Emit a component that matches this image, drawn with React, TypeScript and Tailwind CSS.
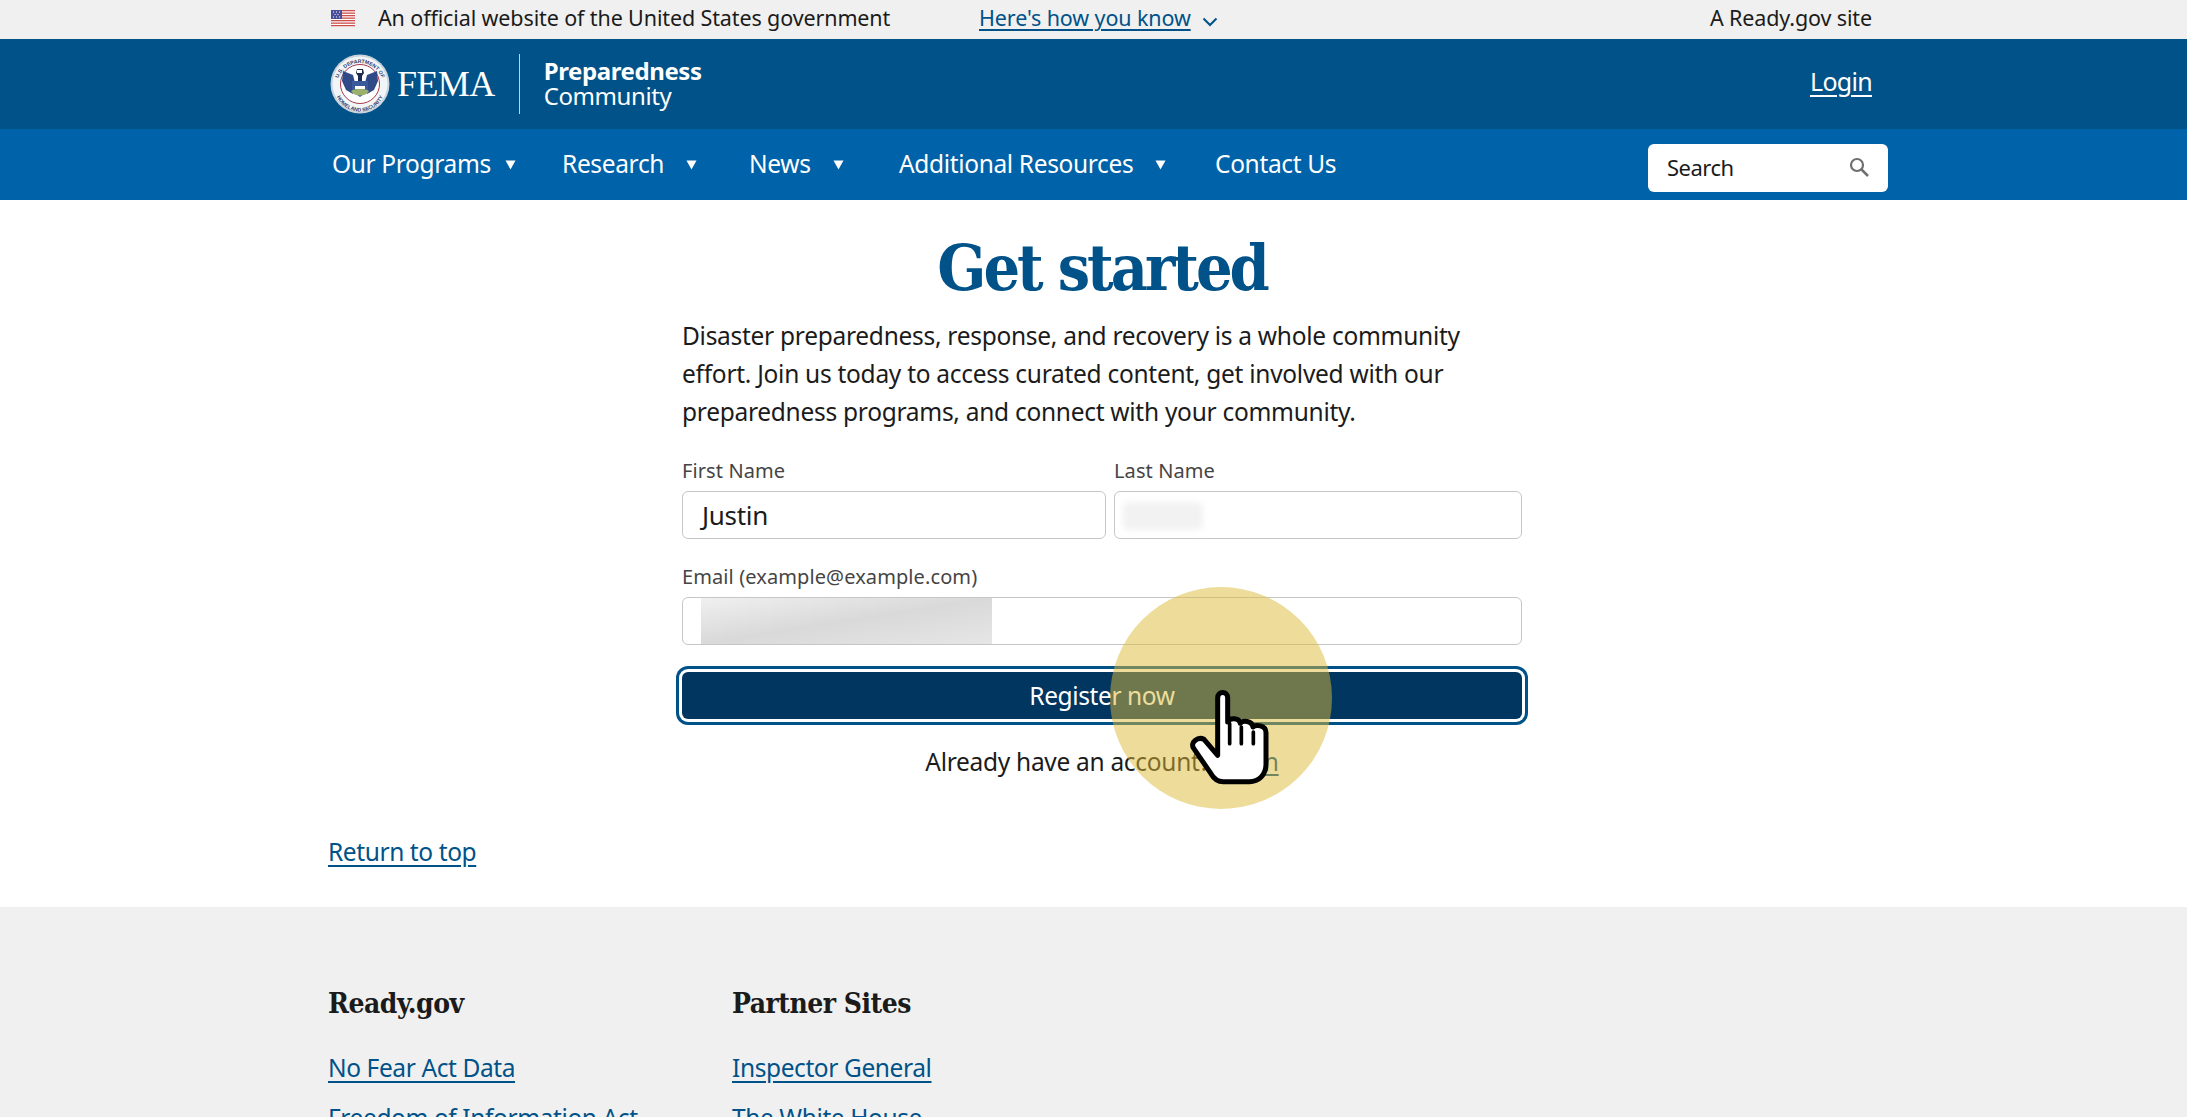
// FEMA Preparedness Community "Get started" page with a click highlight on top.

const NAV = [
  { label: 'Our Programs', width: 'w-[230px]', gap: 'ml-[14px]' },
  { label: 'Research', width: 'w-[187px]', gap: 'ml-[22px]' },
  { label: 'News', width: 'w-[150px]', gap: 'ml-[22px]' },
  { label: 'Additional Resources', width: 'w-[316px]', gap: 'ml-[22px]' },
];

function Flag() {
  const stripes = [0, 1, 2, 3, 4, 5, 6];
  return (
    <svg width="24" height="17" viewBox="0 0 24 17" className="shrink-0">
      <rect width="24" height="17" fill="#fff" />
      {stripes.map((i) => (
        <rect key={i} y={i * 2.5} width="24" height="1.3" fill="#c9504c" />
      ))}
      <rect width="11" height="9" fill="#4a4f9a" />
      <path d="M2 2h1M5 2h1M8 2h1M3.500 4.500h1M6.500 4.500h1M2 7h1M5 7h1M8 7h1" stroke="#fff" strokeWidth="1" />
    </svg>
  );
}

function Seal() {
  return (
    <svg width="60" height="60" viewBox="0 0 60 60" className="shrink-0">
      <circle cx="30" cy="30" r="29.500" fill="#c9d3dc" />
      <circle cx="30" cy="30" r="27.500" fill="#f2f5f8" />
      <circle cx="30" cy="30" r="19.500" fill="#fff" stroke="#a8394a" strokeWidth="1" />
      <defs>
        <path id="seal-top" d="M7 32a23 23 0 0 1 46 0" />
        <path id="seal-bottom" d="M4.500 32a25.500 25.500 0 0 0 51 0" />
      </defs>
      <text fontSize="5.200" fontFamily="Liberation Sans, sans-serif" fontWeight="700" fill="#2a3f6b">
        <textPath href="#seal-top" startOffset="50%" textAnchor="middle">U.S. DEPARTMENT OF</textPath>
      </text>
      <text fontSize="5.200" fontFamily="Liberation Sans, sans-serif" fontWeight="700" fill="#2a3f6b">
        <textPath href="#seal-bottom" startOffset="50%" textAnchor="middle">HOMELAND SECURITY</textPath>
      </text>
      <path d="M13 17l10 4 2 8-2 11-7-4-4-9zM47 17l-10 4-2 8 2 11 7-4 4-9z" fill="#2f4a86" />
      <path d="M22 27h16v10l-8 6-8-6z" fill="#3a5a9c" />
      <path d="M27 15h6l1 4-2 3v5h-4v-5l-2-3z" fill="#1f2c4f" />
      <path d="M27 16h5v3h-5z" fill="#fff" />
      <path d="M21 37c4-3 14-3 18 0-3 6-15 6-18 0z" fill="#9bb06a" />
      <path d="M25 32h10v3H25z" fill="#fff" />
    </svg>
  );
}

function Hand() {
  return (
    <svg width="120" height="130" viewBox="0 0 360 390" className="absolute left-[1170px] top-[672px]">
      <path
        d="M143 250V78c0-22 30-22 30 0v72c5-14 34-14 38 4 7-10 35-8 38 11 8-8 39-6 39 17v95c0 32-22 52-50 52h-78c-16 0-28-8-37-24l-52-76c-12-18 13-36 31-27z"
        fill="#fff"
        stroke="#000"
        strokeWidth="15"
        strokeLinejoin="round"
      />
      <path d="M179 155v60M214 165v50M250 180v35" stroke="#000" strokeWidth="11" strokeLinecap="round" fill="none" />
    </svg>
  );
}

function Field({ label, value, width, children }: { label: string; value?: string; width: string; children?: React.ReactNode }) {
  return (
    <div className={width}>
      <div className="mb-[5px] h-[30px] text-[20px] leading-[30px] tracking-[0.1px] text-[#454545]">{label}</div>
      <div className="relative h-[48px] overflow-hidden rounded-[6px] border border-[#c6c6c6] bg-white pl-[19px] text-[26px] leading-[46px] tracking-[-0.3px] text-[#1b1b1b]">
        {value}
        {children}
      </div>
    </div>
  );
}

export default function App() {
  return (
    <div className="relative h-[1117px] overflow-hidden bg-white font-['Noto_Sans',sans-serif] text-[#1b1b1b]">
      {/* gov banner */}
      <div className="flex h-[39px] items-center bg-[#f0f0f0] pb-[2px] pl-[331px] pr-[315px] text-[21.500px] tracking-[-0.12px]">
        <Flag />
        <span className="ml-[23px] w-[601px]">An official website of the United States government</span>
        <a className="text-[#005288] underline underline-offset-[3px]">Here's how you know</a>
        <svg width="16" height="10" viewBox="0 0 16 10" className="ml-[11px] mt-[7px]">
          <path d="M1.500 1.500L8 8l6.500-6.500" fill="none" stroke="#005288" strokeWidth="2" />
        </svg>
        <span className="ml-auto">A Ready.gov site</span>
      </div>

      {/* logo row */}
      <div className="flex h-[90px] items-center bg-[#005288] pl-[330px] pr-[315px] text-white">
        <Seal />
        <span className="ml-[7px] font-['Liberation_Serif',serif] text-[36px] tracking-[-0.6px]">FEMA</span>
        <div className="ml-[24px] h-[60px] w-px bg-[#bcd4e6]" />
        <div className="mb-[2px] ml-[24px] text-[24px] leading-[25px] tracking-[-0.4px]">
          <div className="font-bold">Preparedness</div>
          <div>Community</div>
        </div>
        <a className="mb-[4px] ml-auto text-[25px] tracking-[-0.7px] underline underline-offset-[4px]">Login</a>
      </div>

      {/* main nav */}
      <div className="flex h-[71px] items-center bg-[#0062a8] pl-[332px] pr-[299px] text-[24.500px] tracking-[-0.35px] text-white">
        {NAV.map((item) => (
          <div key={item.label} className={`flex items-center ${item.width}`}>
            <span>{item.label}</span>
            <svg width="11" height="10" viewBox="0 0 11 10" className={item.gap}>
              <path d="M0.500 0.500h10L5.500 9.500z" fill="#fff" />
            </svg>
          </div>
        ))}
        <span>Contact Us</span>
        <div className="ml-auto mt-[7px] flex h-[48px] w-[240px] items-center justify-between rounded-[6px] bg-white pb-[2px] pl-[19px] pr-[19px] text-[22px] tracking-[-0.5px] text-[#1b1b1b]">
          Search
          <svg width="20" height="20" viewBox="0 0 20 20">
            <circle cx="8" cy="8" r="6" fill="none" stroke="#6f6f6f" strokeWidth="2.200" />
            <path d="M12.500 12.500L19 19" stroke="#6f6f6f" strokeWidth="2.500" />
          </svg>
        </div>
      </div>

      {/* form column */}
      <main className="ml-[682px] w-[840px]">
        <h1 className="pt-[28px] text-center font-['DejaVu_Serif_Condensed','Liberation_Serif',serif] text-[64px] font-bold leading-[80px] tracking-[-3px] text-[#005288]">
          Get started
        </h1>
        <p className="mt-[9px] w-[800px] text-[24.500px] leading-[38px] tracking-[-0.28px]">
          Disaster preparedness, response, and recovery is a whole community effort. Join us today to access curated
          content, get involved with our preparedness programs, and connect with your community.
        </p>
        <div className="mt-[25px] flex gap-[8px]">
          <Field label="First Name" value="Justin" width="w-[424px]" />
          <Field label="Last Name" width="w-[408px]">
            <div className="absolute left-[8px] top-[10px] h-[28px] w-[80px] rounded-[6px] bg-[#f2f2f2] blur-[3px]" />
          </Field>
        </div>
        <div className="mt-[23px]">
          <Field label="Email (example@example.com)" width="w-full">
            <div className="absolute bottom-0 left-[18px] top-0 w-[291px] bg-gradient-to-br from-[#f0f0f0] via-[#d9d9d9] to-[#e6e6e6]" />
          </Field>
        </div>
        <button className="mt-[27px] block h-[47px] w-full rounded-[6px] bg-[#003660] pt-[1px] text-[24.500px] tracking-[-0.4px] text-white shadow-[0_0_0_3px_#fff,0_0_0_6px_#005288]">
          Register now
        </button>
        <p className="mt-[24px] text-center text-[24.500px] leading-[38px] tracking-[-0.3px]">
          Already have an account? <a className="text-[#005288] underline underline-offset-[3px]">Login</a>
        </p>
      </main>

      <div className="h-[126px] pl-[328px] pt-[52px] text-[24.500px] leading-[38px] tracking-[-0.4px]">
        <a className="text-[#005288] underline underline-offset-[4px]">Return to top</a>
      </div>

      {/* footer */}
      <footer className="flex bg-[#f0f0f0] pb-[40px] pl-[328px] pt-[77px] text-[24.500px] tracking-[-0.4px]">
        <div className="w-[404px]">
          <h2 className="font-['DejaVu_Serif_Condensed','Liberation_Serif',serif] text-[28px] font-bold leading-[40px] tracking-[-0.5px]">Ready.gov</h2>
          <ul className="mt-[25px] space-y-[12px] leading-[38px] text-[#005288] underline underline-offset-[4px]">
            <li>No Fear Act Data</li>
            <li>Freedom of Information Act</li>
          </ul>
        </div>
        <div>
          <h2 className="font-['DejaVu_Serif_Condensed','Liberation_Serif',serif] text-[28px] font-bold leading-[40px] tracking-[-0.5px]">Partner Sites</h2>
          <ul className="mt-[25px] space-y-[12px] leading-[38px] text-[#005288] underline underline-offset-[4px]">
            <li>Inspector General</li>
            <li>The White House</li>
          </ul>
        </div>
      </footer>

      {/* click highlight */}
      <div className="absolute left-[1110px] top-[587px] h-[222px] w-[222px] rounded-full bg-[rgba(222,185,55,0.5)]" />
      <Hand />
    </div>
  );
}
